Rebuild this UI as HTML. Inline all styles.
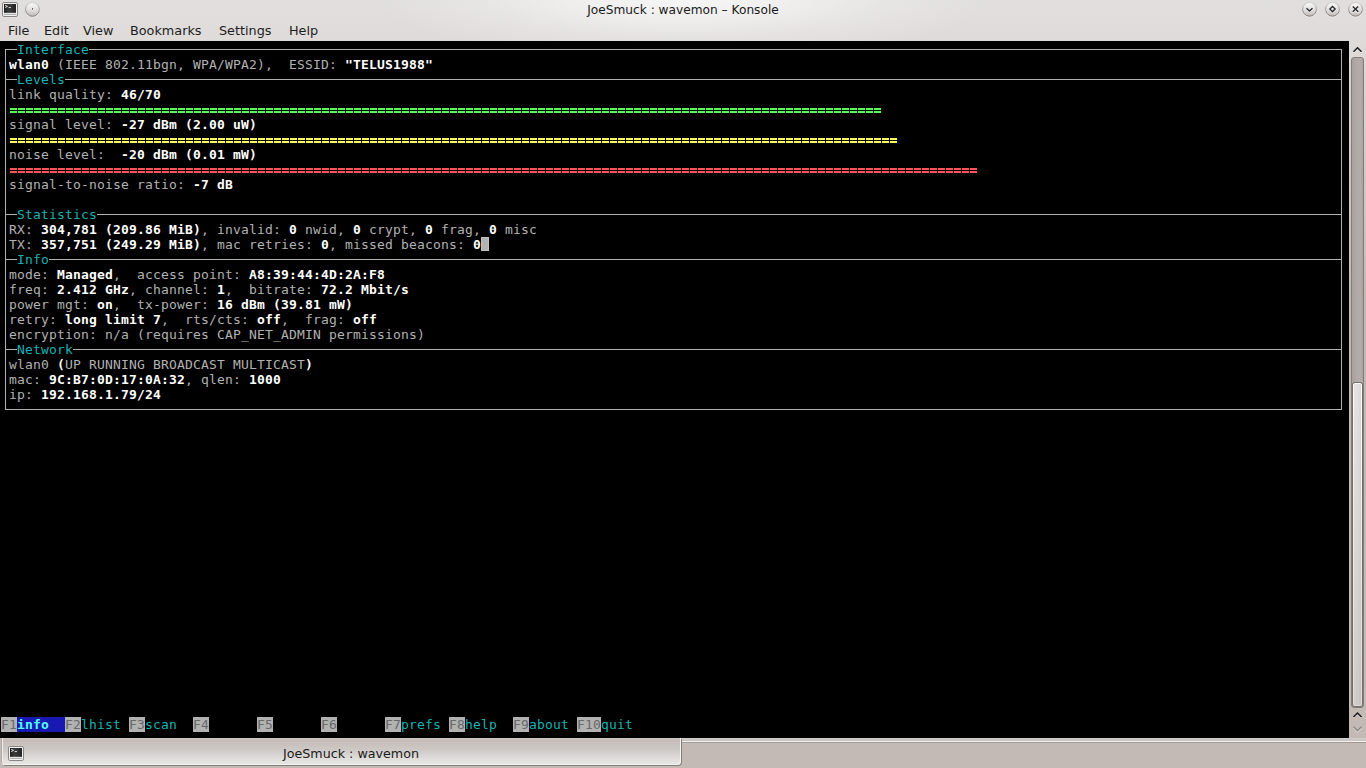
<!DOCTYPE html>
<html><head><meta charset="utf-8"><title>JoeSmuck : wavemon – Konsole</title>
<style>
html,body{margin:0;padding:0;width:1366px;height:768px;overflow:hidden;background:#c3bab6;}
body{position:relative;font-family:"DejaVu Sans","Liberation Sans",sans-serif;font-size:12.8px;color:#222;}
#win{position:absolute;left:0;top:0;width:1366px;height:768px;background:radial-gradient(ellipse 310px 58px at 683px 0px,rgba(255,255,255,0.72),rgba(255,255,255,0.5) 33%,rgba(255,255,255,0.2) 66%,rgba(255,255,255,0) 100%),linear-gradient(180deg,#e1dfde 0px,#dedbd9 41px,#c3bab6 300px,#c3bab6 768px);}
#title{position:absolute;left:0;top:2px;width:1366px;text-align:center;line-height:17px;font-size:12.18px;color:#1a1a1a;}
#menubar{position:absolute;left:0;top:19px;width:1366px;height:22px;}
#menubar span{position:absolute;top:3px;line-height:17px;color:#1d1d1d;}
#term{position:absolute;left:0;top:41px;width:1349px;height:697px;background:#000;}
.t{position:absolute;white-space:pre;font-family:"DejaVu Sans Mono","Liberation Mono",monospace;font-size:13px;letter-spacing:0.1733px;line-height:15px;height:15px;color:#b2b2b2;}
.b{font-weight:bold;color:#fff;}
.c{color:#18b2b2;}
.g,.y,.r{font-size:12px;letter-spacing:0.776px;line-height:16px;height:15px;overflow:hidden;background-image:linear-gradient(180deg,transparent 6px,currentColor 6px,currentColor 8px,transparent 8px,transparent 9px,currentColor 9px,currentColor 11px,transparent 11px);}
.g::after,.y::after,.r::after{content:"";position:absolute;left:0;top:0;right:0;bottom:0;background-image:repeating-linear-gradient(90deg,#000 0,#000 1px,transparent 1px,transparent 8px);}
.g{color:#54ff54;}
.y{color:#ffff54;}
.r{color:#ff5454;}
.fk{background:#b2b2b2;color:#686868;}
.fa{background:#1818b2;color:#54ffff;font-weight:bold;}
.hl{position:absolute;height:1px;background:#b2b2b2;}
.vl{position:absolute;width:1px;background:#b2b2b2;}
#cursor{position:absolute;left:481px;top:237px;width:8px;height:14px;background:#b2b2b2;box-shadow:inset 0 0 0 1px #c2c2c2;}
#groove{position:absolute;left:1351px;top:57px;width:13px;height:651px;border-radius:3px;box-sizing:border-box;border:1px solid #837d79;background:linear-gradient(90deg,#a8a09c,#b1a9a5 40%,#b5ada9 75%,#aaa29e);}
#thumb{position:absolute;left:1353px;top:383px;width:9px;height:323px;border-radius:2.5px;box-sizing:border-box;background:linear-gradient(180deg,#fbfbfa,#dfdcd9);box-shadow:0 0 0.5px 1px #746e6b;}
#thumb::before{content:"";position:absolute;left:1px;top:1px;right:1px;bottom:1px;border-radius:1.5px;background:linear-gradient(90deg,rgba(255,255,255,0.12),rgba(255,255,255,0) 60%,rgba(0,0,0,0.03)),linear-gradient(180deg,#e2e0de,#ccc8c5);}
#tab{position:absolute;left:1px;top:738px;width:680px;height:27px;background:linear-gradient(180deg,#d2ccc9 0px,#c4bcb8 2px,#cec9c6 12px,#e2e0de 22px,#e8e6e5 27px);border-radius:0 0 4px 4px;box-shadow:inset -1px -1px 0 #f4f3f2,inset 1px 0 0 #b0a9a5,inset 2px 0 0 #f0eeed,1px 1px 0 #857e7b;}
#paneline{position:absolute;left:681px;top:738px;width:685px;height:5px;background:linear-gradient(180deg,#d4cfcc 0px,#c8c1bd 3px,#f2f1f0 3px,#f2f1f0 4px,#a09995 4px,#a09995 5px);}
#tabtxt{position:absolute;left:29px;top:745px;width:644px;text-align:center;line-height:17px;font-size:12.7px;color:#1a1a1a;}
svg{position:absolute;overflow:visible;}
</style></head><body>
<div id="win"></div>
<svg width="0" height="0"><defs>
<linearGradient id="bg" x1="0" y1="0" x2="0" y2="1"><stop offset="0" stop-color="#fafaf9"/><stop offset="0.5" stop-color="#e4e2e0"/><stop offset="1" stop-color="#bdb9b6"/></linearGradient>
<linearGradient id="bs" x1="0" y1="0" x2="0" y2="1"><stop offset="0" stop-color="#d0cdcb"/><stop offset="0.5" stop-color="#9a9693"/><stop offset="1" stop-color="#807c79"/></linearGradient>
<linearGradient id="scr" x1="0" y1="0" x2="1" y2="0"><stop offset="0" stop-color="#1e1e1e"/><stop offset="0.4" stop-color="#3c3c3c"/><stop offset="1" stop-color="#222"/></linearGradient>
</defs></svg>
<svg width="16" height="15" style="left:2px;top:2px"><rect x="0.5" y="0.5" width="15" height="14" rx="1.6" fill="#e2e2e2" stroke="#858585"/><rect x="1.5" y="1.5" width="13" height="12" rx="0.8" fill="none" stroke="#f1f1f1"/><rect x="2" y="2" width="12" height="8.8" fill="url(#scr)"/><rect x="2" y="12.1" width="12" height="0.7" fill="#a2a2a2"/><path d="M3.2 3.3l2.3 1.1l-2.3 1.1" stroke="#f4f4f4" fill="none" stroke-width="0.9"/><path d="M6.6 5.5h2.4" stroke="#eee" fill="none" stroke-width="0.8"/></svg>
<svg width="16" height="16" style="left:24px;top:1px"><circle cx="8.4" cy="9.2" r="7.3" fill="#f8f7f7" opacity="0.75"/><circle cx="8.4" cy="8.4" r="6.9" fill="url(#bg)" stroke="url(#bs)" stroke-width="1"/><rect x="8" y="7.1" width="0.9" height="1.7" fill="#3a3a3a"/><rect x="8" y="8.8" width="0.9" height="0.9" fill="#fff"/></svg>
<div id="title">JoeSmuck : wavemon – Konsole</div>
<svg width="70" height="19" style="left:1296px;top:0">
<g fill="#f8f7f7" opacity="0.75"><circle cx="13.5" cy="10.1" r="7.3"/><circle cx="36.5" cy="10.1" r="7.3"/><circle cx="59.5" cy="10.1" r="7.3"/></g>
<g fill="url(#bg)" stroke="url(#bs)" stroke-width="1"><circle cx="13.5" cy="9.3" r="6.9"/><circle cx="36.5" cy="9.3" r="6.9"/><circle cx="59.5" cy="9.3" r="6.9"/></g>
<g fill="none" stroke="#fff" stroke-width="1.2" transform="translate(0,1)" opacity="0.85"><path d="M10.5 8.3l3 2.7l3-2.7"/><path d="M36.5 6.5l2.6 2.6l-2.6 2.6l-2.6-2.6z"/><path d="M56.8 6.5l5.4 5.2M62.2 6.5l-5.4 5.2"/></g>
<g fill="none" stroke="#2a2a2a" stroke-width="1.4"><path d="M10.5 8.3l3 2.7l3-2.7"/><path d="M36.5 6.5l2.6 2.6l-2.6 2.6l-2.6-2.6z"/><path d="M56.8 6.5l5.4 5.2M62.2 6.5l-5.4 5.2"/></g></svg>
<div id="menubar"><span style="left:8px">File</span><span style="left:44px">Edit</span><span style="left:83px">View</span><span style="left:130px">Bookmarks</span><span style="left:219px">Settings</span><span style="left:289px">Help</span></div>
<div id="term"></div>
<i class="hl" style="left:5px;top:49px;width:12px"></i>
<i class="hl" style="left:89px;top:49px;width:1253px"></i>
<i class="hl" style="left:5px;top:79px;width:12px"></i>
<i class="hl" style="left:65px;top:79px;width:1277px"></i>
<i class="hl" style="left:5px;top:214px;width:12px"></i>
<i class="hl" style="left:97px;top:214px;width:1245px"></i>
<i class="hl" style="left:5px;top:259px;width:12px"></i>
<i class="hl" style="left:49px;top:259px;width:1293px"></i>
<i class="hl" style="left:5px;top:349px;width:12px"></i>
<i class="hl" style="left:73px;top:349px;width:1269px"></i>
<i class="hl" style="left:5px;top:409px;width:1337px"></i>
<i class="vl" style="left:5px;top:49px;height:361px"></i>
<i class="vl" style="left:1341px;top:49px;height:361px"></i>
<span class="t c" style="left:17px;top:42px">Interface</span>
<span class="t b" style="left:9px;top:57px">wlan0</span>
<span class="t n" style="left:57px;top:57px">(IEEE 802.11bgn, WPA/WPA2),  ESSID: </span>
<span class="t b" style="left:345px;top:57px">&quot;TELUS1988&quot;</span>
<span class="t c" style="left:17px;top:72px">Levels</span>
<span class="t n" style="left:9px;top:87px">link quality: </span>
<span class="t b" style="left:121px;top:87px">46/70</span>
<span class="t g" style="left:9px;top:102px">=============================================================================================================</span>
<span class="t n" style="left:9px;top:117px">signal level: </span>
<span class="t b" style="left:121px;top:117px">-27 dBm (2.00 uW)</span>
<span class="t y" style="left:9px;top:132px">===============================================================================================================</span>
<span class="t n" style="left:9px;top:147px">noise level:  </span>
<span class="t b" style="left:121px;top:147px">-20 dBm (0.01 mW)</span>
<span class="t r" style="left:9px;top:162px">=========================================================================================================================</span>
<span class="t n" style="left:9px;top:177px">signal-to-noise ratio: </span>
<span class="t b" style="left:193px;top:177px">-7 dB</span>
<span class="t c" style="left:17px;top:207px">Statistics</span>
<span class="t n" style="left:9px;top:222px">RX: </span>
<span class="t b" style="left:41px;top:222px">304,781 (209.86 MiB)</span>
<span class="t n" style="left:201px;top:222px">, invalid: </span>
<span class="t b" style="left:289px;top:222px">0</span>
<span class="t n" style="left:297px;top:222px"> nwid, </span>
<span class="t b" style="left:353px;top:222px">0</span>
<span class="t n" style="left:361px;top:222px"> crypt, </span>
<span class="t b" style="left:425px;top:222px">0</span>
<span class="t n" style="left:433px;top:222px"> frag, </span>
<span class="t b" style="left:489px;top:222px">0</span>
<span class="t n" style="left:497px;top:222px"> misc</span>
<span class="t n" style="left:9px;top:237px">TX: </span>
<span class="t b" style="left:41px;top:237px">357,751 (249.29 MiB)</span>
<span class="t n" style="left:201px;top:237px">, mac retries: </span>
<span class="t b" style="left:321px;top:237px">0</span>
<span class="t n" style="left:329px;top:237px">, missed beacons: </span>
<span class="t b" style="left:473px;top:237px">0</span>
<span class="t c" style="left:17px;top:252px">Info</span>
<span class="t n" style="left:9px;top:267px">mode: </span>
<span class="t b" style="left:57px;top:267px">Managed</span>
<span class="t n" style="left:113px;top:267px">,  access point: </span>
<span class="t b" style="left:249px;top:267px">A8:39:44:4D:2A:F8</span>
<span class="t n" style="left:9px;top:282px">freq: </span>
<span class="t b" style="left:57px;top:282px">2.412 GHz</span>
<span class="t n" style="left:129px;top:282px">, channel: </span>
<span class="t b" style="left:217px;top:282px">1</span>
<span class="t n" style="left:225px;top:282px">,  bitrate: </span>
<span class="t b" style="left:321px;top:282px">72.2 Mbit/s</span>
<span class="t n" style="left:9px;top:297px">power mgt: </span>
<span class="t b" style="left:97px;top:297px">on</span>
<span class="t n" style="left:113px;top:297px">,  tx-power: </span>
<span class="t b" style="left:217px;top:297px">16 dBm (39.81 mW)</span>
<span class="t n" style="left:9px;top:312px">retry: </span>
<span class="t b" style="left:65px;top:312px">long limit 7</span>
<span class="t n" style="left:161px;top:312px">,  rts/cts: </span>
<span class="t b" style="left:257px;top:312px">off</span>
<span class="t n" style="left:281px;top:312px">,  frag: </span>
<span class="t b" style="left:353px;top:312px">off</span>
<span class="t n" style="left:9px;top:327px">encryption: n/a (requires CAP_NET_ADMIN permissions)</span>
<span class="t c" style="left:17px;top:342px">Network</span>
<span class="t n" style="left:9px;top:357px">wlan0 </span>
<span class="t b" style="left:57px;top:357px">(</span>
<span class="t n" style="left:65px;top:357px">UP RUNNING BROADCAST MULTICAST</span>
<span class="t b" style="left:305px;top:357px">)</span>
<span class="t n" style="left:9px;top:372px">mac: </span>
<span class="t b" style="left:49px;top:372px">9C:B7:0D:17:0A:32</span>
<span class="t n" style="left:185px;top:372px">, qlen: </span>
<span class="t b" style="left:249px;top:372px">1000</span>
<span class="t n" style="left:9px;top:387px">ip: </span>
<span class="t b" style="left:41px;top:387px">192.168.1.79/24</span>
<span class="t fk" style="left:1px;top:717px;width:16px">F1</span>
<span class="t fa" style="left:17px;top:717px;width:48px">info</span>
<span class="t fk" style="left:65px;top:717px;width:16px">F2</span>
<span class="t c" style="left:81px;top:717px">lhist</span>
<span class="t fk" style="left:129px;top:717px;width:16px">F3</span>
<span class="t c" style="left:145px;top:717px">scan</span>
<span class="t fk" style="left:193px;top:717px;width:16px">F4</span>
<span class="t fk" style="left:257px;top:717px;width:16px">F5</span>
<span class="t fk" style="left:321px;top:717px;width:16px">F6</span>
<span class="t fk" style="left:385px;top:717px;width:16px">F7</span>
<span class="t c" style="left:401px;top:717px">prefs</span>
<span class="t fk" style="left:449px;top:717px;width:16px">F8</span>
<span class="t c" style="left:465px;top:717px">help</span>
<span class="t fk" style="left:513px;top:717px;width:16px">F9</span>
<span class="t c" style="left:529px;top:717px">about</span>
<span class="t fk" style="left:577px;top:717px;width:24px">F10</span>
<span class="t c" style="left:601px;top:717px">quit</span>
<div id="cursor"></div>
<svg width="17" height="16" style="left:1349px;top:41px"><path d="M4.5 11.8l4-4l4 4" fill="none" stroke="#fff" stroke-width="1.4" opacity="0.6"/><path d="M4.5 10.8l4-4l4 4" fill="none" stroke="#1a1a1a" stroke-width="1.5"/></svg>
<div id="groove"></div><div id="thumb"></div>
<svg width="17" height="30" style="left:1349px;top:708px"><path d="M4.5 10l4-4l4 4" fill="none" stroke="#e8e6e4" stroke-width="1.4" opacity="0.7"/><path d="M4.5 9l4-4l4 4" fill="none" stroke="#1a1a1a" stroke-width="1.5"/><path d="M4.5 19.8l4 4l4-4" fill="none" stroke="#e6e3e1" stroke-width="1.3" opacity="0.9"/><path d="M4.5 18.8l4 4l4-4" fill="none" stroke="#8d8783" stroke-width="1.4"/></svg>
<div id="paneline"></div>
<div id="tab"></div>
<svg width="16" height="15" style="left:8px;top:746px"><rect x="0.5" y="0.5" width="15" height="14" rx="1.6" fill="#e2e2e2" stroke="#858585"/><rect x="1.5" y="1.5" width="13" height="12" rx="0.8" fill="none" stroke="#f1f1f1"/><rect x="2" y="2" width="12" height="8.8" fill="url(#scr)"/><rect x="2" y="12.1" width="12" height="0.7" fill="#a2a2a2"/><path d="M3.2 3.3l2.3 1.1l-2.3 1.1" stroke="#f4f4f4" fill="none" stroke-width="0.9"/><path d="M6.6 5.5h2.4" stroke="#eee" fill="none" stroke-width="0.8"/></svg>
<div id="tabtxt">JoeSmuck : wavemon</div>
</body></html>
